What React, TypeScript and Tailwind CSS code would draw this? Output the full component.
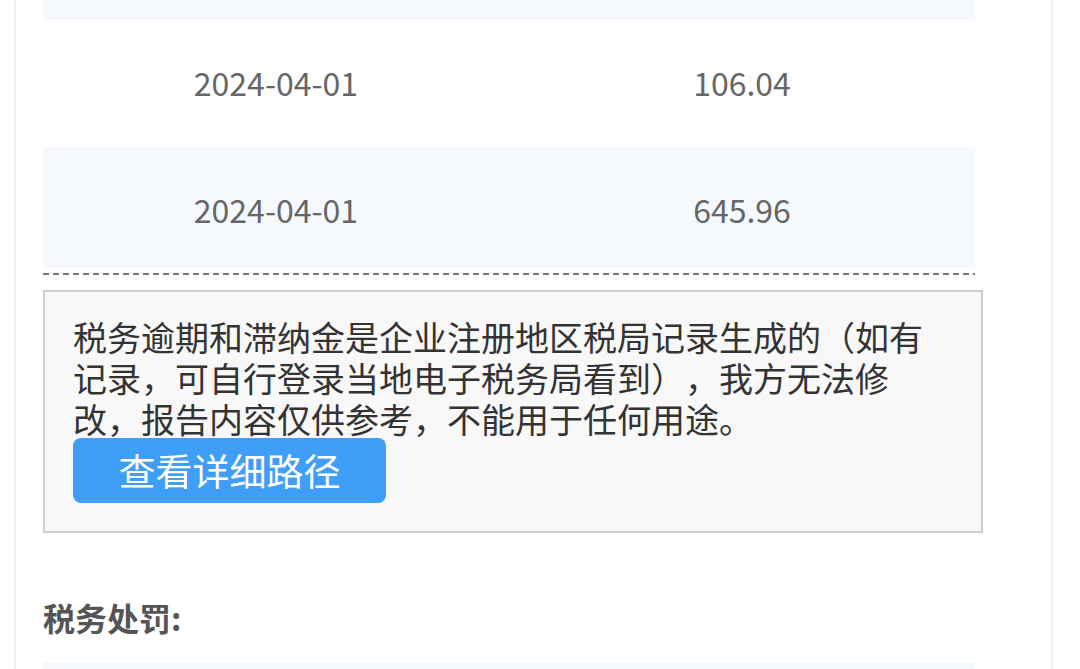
const rows = [
    { date: '2024-04-01', amount: '106.04', tint: false, h: 'h-[127px] pb-[4px]' },
    { date: '2024-04-01', amount: '645.96', tint: true, h: 'h-[121px] pt-[2px]' },
];

function TaxRow({ date, amount, tint, h }: { date: string; amount: string; tint: boolean; h: string }) {
    return (
        <div className={`grid grid-cols-2 items-center text-center ${h} ${tint ? 'bg-[#f5f9fe]' : 'bg-white'}`}>
            <span className="text-[32px] leading-none text-[#666666]">{date}</span>
            <span className="text-[32px] leading-none text-[#666666]">{amount}</span>
        </div>
    );
}

export default function App() {
    return (
        <div
            className="h-[669px] w-[1080px] overflow-hidden bg-white px-[14px] [text-spacing-trim:space-all]"
            style={{ fontFamily: '"Noto Sans CJK SC", "Noto Sans", sans-serif' }}
        >
            <div className="h-full w-[1039px] border-x-2 border-[#efefef] pl-[27px]">
                <div className="w-[932px]">
                    {/* tail of the previous row */}
                    <div className="h-[20px] bg-[#f5f9fe]" />
                    {rows.map((r, i) => (
                        <TaxRow key={i} {...r} />
                    ))}
                    <div className="mt-[5px] h-[2px] bg-[repeating-linear-gradient(to_right,#777777_0_6px,transparent_6px_10px)]" />
                </div>

                <div className="mt-[15px] w-[940px] border-2 border-[#cdcdcd] bg-[#f8f8f8] px-[28px] pb-[28px] pt-[24px]">
                    <p className="w-[880px] text-[34px] leading-[41px] text-[#333333]">
                        税务逾期和滞纳金是企业注册地区税局记录生成的（如有记录，可自行登录当地电子税务局看到），我方无法修改，报告内容仅供参考，不能用于任何用途。
                    </p>
                    <button className="mt-[-1px] flex h-[65px] w-[313px] items-center justify-center rounded-[8px] bg-[#3f9ef7] text-[37px] leading-none text-white">
                        查看详细路径
                    </button>
                </div>

                <h3 className="mt-[64px] text-[32px] font-bold leading-[40px] text-[#555555]">税务处罚:</h3>

                <div className="mt-[25px] h-[40px] w-[932px] bg-[#f5f9fe]" />
            </div>
        </div>
    );
}
